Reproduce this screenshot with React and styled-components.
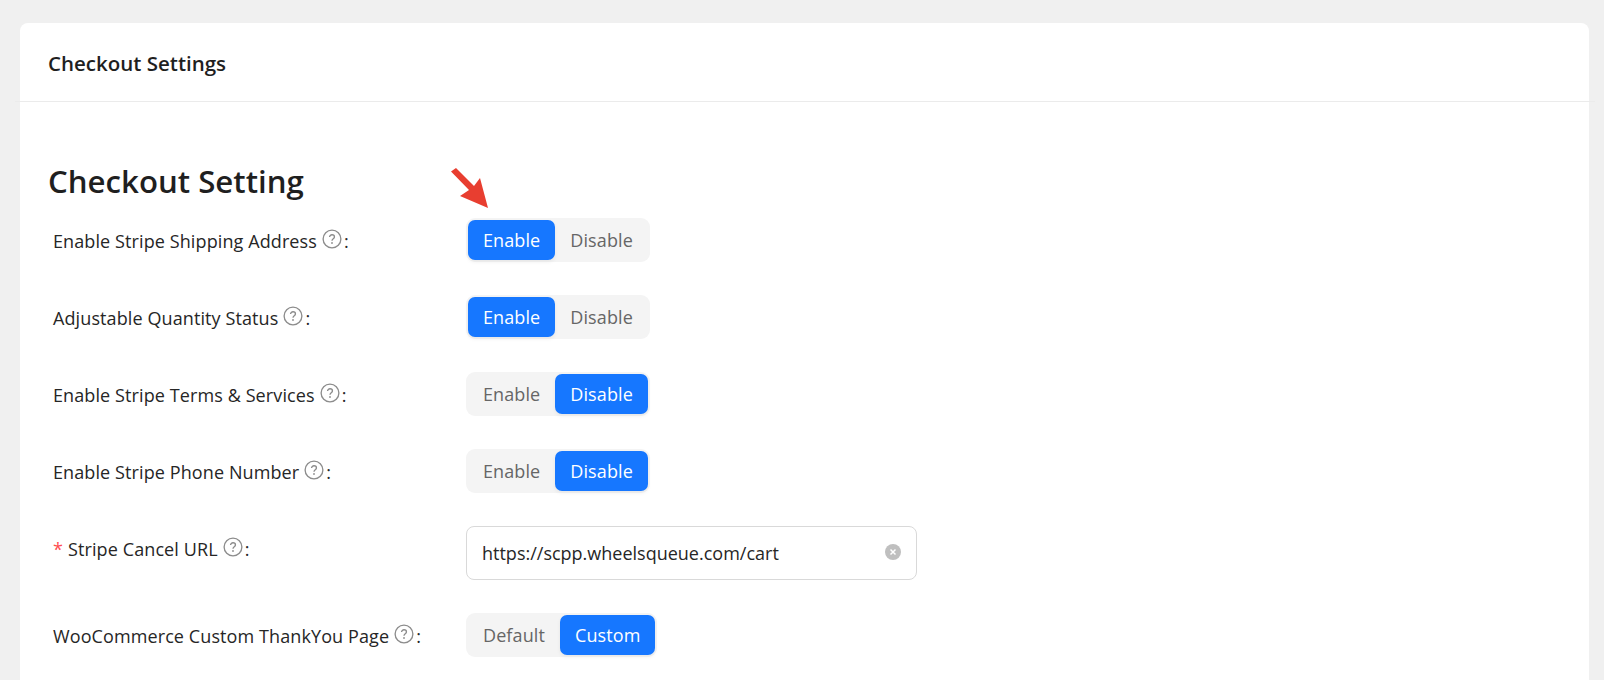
import React from "react";
import styled, { createGlobalStyle } from "styled-components";

const Global = createGlobalStyle`
  html, body {
    margin: 0;
    padding: 0;
    height: 680px;
    overflow: hidden;
    background: #f0f0f0;
    font-family: "Open Sans", "Noto Sans", "Liberation Sans", sans-serif;
    color: #1f1f1f;
  }
  * { box-sizing: border-box; }
`;

const Page = styled.div`
  padding: 23px 15px 0 20px;
`;

const Card = styled.div`
  background: #fff;
  border-radius: 8px 8px 0 0;
  height: 657px;
`;

const CardHeader = styled.div`
  height: 79px;
  margin: 0 -6px 0 -5px;
  padding: 2px 33px 0;
  display: flex;
  align-items: center;
  border-bottom: 1px solid #ebebeb;
  font-size: 20.5px;
  font-weight: 600;
`;

const CardBody = styled.div`
  padding: 56px 28px 0;
`;

const Heading = styled.h2`
  margin: 0 0 15px;
  height: 45px;
  line-height: 47px;
  font-size: 31.2px;
  font-weight: 600;
  color: #1f1f1f;
`;

const Form = styled.div`
  display: flex;
  flex-direction: column;
  gap: 33px;
`;

const Row = styled.div`
  display: flex;
  align-items: flex-start;
`;

const Label = styled.div`
  width: 418px;
  padding: 2px 0 0 5px;
  height: 44px;
  display: flex;
  align-items: center;
  font-size: 18px;
  letter-spacing: 0.1px;
  color: #262626;
  white-space: nowrap;
`;

const Required = styled.span`
  color: #ff4d4f;
  margin-right: 5px;
`;

const HelpIcon = styled.svg`
  width: 20px;
  height: 20px;
  margin: 0 2px 4px 5px;
  flex: none;
`;

const Toggle = styled.div`
  position: relative;
  display: inline-flex;
  height: 44px;
  padding: 2px;
  background: #f4f4f4;
  border-radius: 9px;
`;

const ToggleOption = styled.div`
  height: 40px;
  padding: 0 15px;
  display: flex;
  align-items: center;
  justify-content: center;
  border-radius: 7px;
  font-size: 18px;
  letter-spacing: 0.1px;
  color: ${(p) => (p.$active ? "#fff" : "#666")};
  background: ${(p) => (p.$active ? "#1677ff" : "transparent")};
  box-shadow: ${(p) => (p.$active ? "0 2px 4px rgba(0,0,0,0.06)" : "none")};
`;

const Arrow = styled.svg`
  position: absolute;
  left: -15px;
  top: -50px;
  width: 37px;
  height: 40px;
`;

const InputBox = styled.div`
  width: 451px;
  height: 54px;
  padding: 0 15px;
  display: flex;
  align-items: center;
  justify-content: space-between;
  border: 1px solid #d9d9d9;
  border-radius: 8px;
  font-size: 18px;
  color: #262626;
`;

const ClearIcon = styled.svg`
  width: 16px;
  height: 16px;
  margin-bottom: 3px;
`;

const Help = () => (
  <HelpIcon viewBox="0 0 18 18" fill="none">
    <circle cx="9" cy="9" r="8" stroke="#8c8c8c" strokeWidth="1.2" />
    <path
      d="M6.8 7.2c0-1.2 1-2 2.2-2s2.2.8 2.2 1.9c0 1.6-2.2 1.7-2.2 3.4"
      stroke="#8c8c8c"
      strokeWidth="1.2"
    />
    <circle cx="9" cy="12.6" r=".8" fill="#8c8c8c" />
  </HelpIcon>
);

const SettingToggle = ({ options, active, arrow }) => (
  <Toggle>
    {arrow && (
      <Arrow viewBox="0 0 37 40">
        <path d="M0 3.5 L5 0 L23 18 L29 10 L37 40 L9 28 L18 22 Z" fill="#e83e30" />
      </Arrow>
    )}
    {options.map((o, i) => (
      <ToggleOption key={o} $active={i === active}>
        {o}
      </ToggleOption>
    ))}
  </Toggle>
);

const onOff = ["Enable", "Disable"];

export default function App() {
  return (
    <Page>
      <Global />
      <Card>
        <CardHeader>Checkout Settings</CardHeader>
        <CardBody>
          <Heading>Checkout Setting</Heading>
          <Form>
            <Row>
              <Label>
                Enable Stripe Shipping Address
                <Help />:
              </Label>
              <SettingToggle options={onOff} active={0} arrow />
            </Row>
            <Row>
              <Label>
                Adjustable Quantity Status
                <Help />:
              </Label>
              <SettingToggle options={onOff} active={0} />
            </Row>
            <Row>
              <Label>
                Enable Stripe Terms &amp; Services
                <Help />:
              </Label>
              <SettingToggle options={onOff} active={1} />
            </Row>
            <Row>
              <Label>
                Enable Stripe Phone Number
                <Help />:
              </Label>
              <SettingToggle options={onOff} active={1} />
            </Row>
            <Row>
              <Label>
                <Required>*</Required>
                Stripe Cancel URL
                <Help />:
              </Label>
              <InputBox>
                https://scpp.wheelsqueue.com/cart
                <ClearIcon viewBox="0 0 16 16">
                  <circle cx="8" cy="8" r="8" fill="#bfbfbf" />
                  <path d="M5.5 5.5l5 5M10.5 5.5l-5 5" stroke="#fff" strokeWidth="1.5" />
                </ClearIcon>
              </InputBox>
            </Row>
            <Row>
              <Label>
                WooCommerce Custom ThankYou Page
                <Help />:
              </Label>
              <SettingToggle options={["Default", "Custom"]} active={1} />
            </Row>
          </Form>
        </CardBody>
      </Card>
    </Page>
  );
}
